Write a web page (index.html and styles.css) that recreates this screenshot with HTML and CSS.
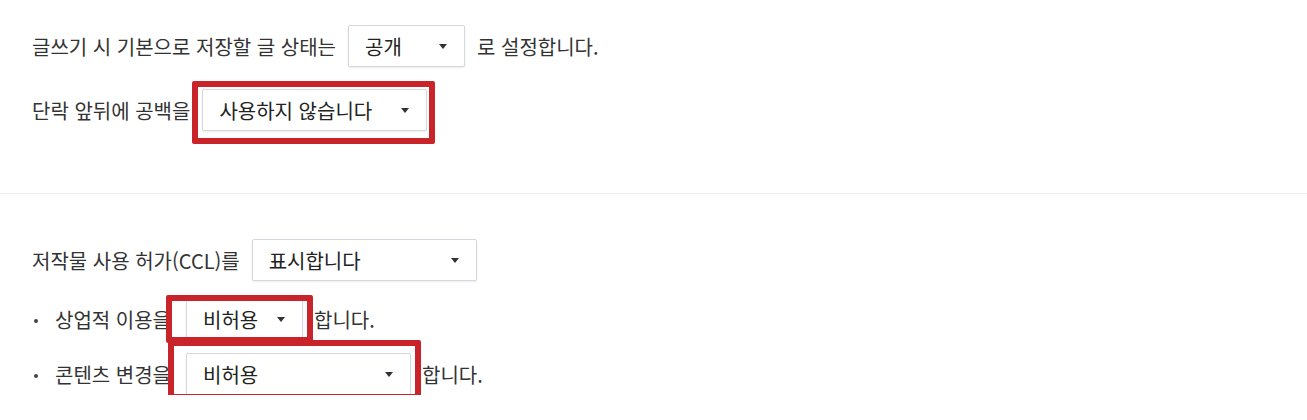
FILE: index.html
```html
<!DOCTYPE html>
<html lang="ko">
  <head>
    <meta charset="UTF-8" />
    <meta name="viewport" content="width=device-width, initial-scale=1.0" />
    <title>글쓰기 설정</title>
    <link rel="stylesheet" href="styles.css">
  </head>
  <body>
    <div class="settings">
      <section class="group group-write">
        <div class="row">
          <span>글쓰기 시 기본으로 저장할 글 상태는</span>
          <span class="select select-sm">공개<i class="caret"></i></span>
          <span>로 설정합니다.</span>
        </div>
        <div class="row row-next">
          <span>단락 앞뒤에 공백을</span>
          <span class="select select-lg">사용하지 않습니다<i class="caret"></i><b class="mark mark-space"></b></span>
        </div>
      </section>

      <section class="group group-ccl">
        <div class="row">
          <span>저작물 사용 허가(CCL)를</span>
          <span class="select select-lg">표시합니다<i class="caret"></i></span>
        </div>
        <div class="row row-bullet row-commercial">
          <span>상업적 이용을</span>
          <span class="select select-sm">비허용<i class="caret"></i><b class="mark mark-commercial"></b></span>
          <span>합니다.</span>
        </div>
        <div class="row row-bullet row-change">
          <span>콘텐츠 변경을</span>
          <span class="select select-lg">비허용<i class="caret"></i><b class="mark mark-change"></b></span>
          <span>합니다.</span>
        </div>
      </section>
    </div>
  </body>
</html>
```

FILE: styles.css
```css
* {
  box-sizing: border-box;
}

body {
  margin: 0;
  font-family: "Noto Sans CJK KR", "Noto Sans", sans-serif;
  font-size: 20px;
  color: #333;
  background: #fff;
}

.group {
  padding-left: 32px;
}

.group-write {
  padding-top: 25px;
  padding-bottom: 62px;
  border-bottom: 1px solid #eeeeee;
}

.group-ccl {
  padding-top: 45px;
}

.row {
  display: flex;
  align-items: center;
  height: 42px;
  white-space: nowrap;
}

.row-next {
  margin-top: 22px;
}

.row-commercial {
  margin-top: 17px;
}

.row-change {
  margin-top: 13px;
}

.row-bullet {
  position: relative;
  padding-left: 23px;
}

.row-bullet::before {
  content: "";
  position: absolute;
  left: 2px;
  top: 50%;
  width: 4px;
  height: 4px;
  border-radius: 50%;
  background: #444;
}

.select {
  position: relative;
  display: inline-flex;
  align-items: center;
  justify-content: space-between;
  height: 42px;
  margin: 0 12px;
  padding: 0 17px 0 16px;
  border: 1px solid #d3d8df;
  border-radius: 2px;
  background: #fff;
  box-shadow: 0 1px 2px rgba(0, 0, 0, 0.08);
  color: #222;
}

.row-bullet .select {
  margin-left: 15px;
  margin-right: 11px;
}

.select-sm {
  width: 117px;
}

.select-lg {
  width: 225px;
}

.caret {
  width: 0;
  height: 0;
  border-left: 4.5px solid transparent;
  border-right: 4.5px solid transparent;
  border-top: 5px solid #333;
}

.mark {
  position: absolute;
  border: 6px solid #c9242a;
  border-radius: 2px;
}

.mark-space {
  left: -11px;
  right: -9px;
  top: -9px;
  bottom: -14px;
}

.mark-commercial {
  left: -21px;
  right: -11px;
  top: -4px;
  bottom: -4px;
}

.mark-change {
  left: -19px;
  right: -11px;
  top: -14px;
  bottom: -6px;
}
```
